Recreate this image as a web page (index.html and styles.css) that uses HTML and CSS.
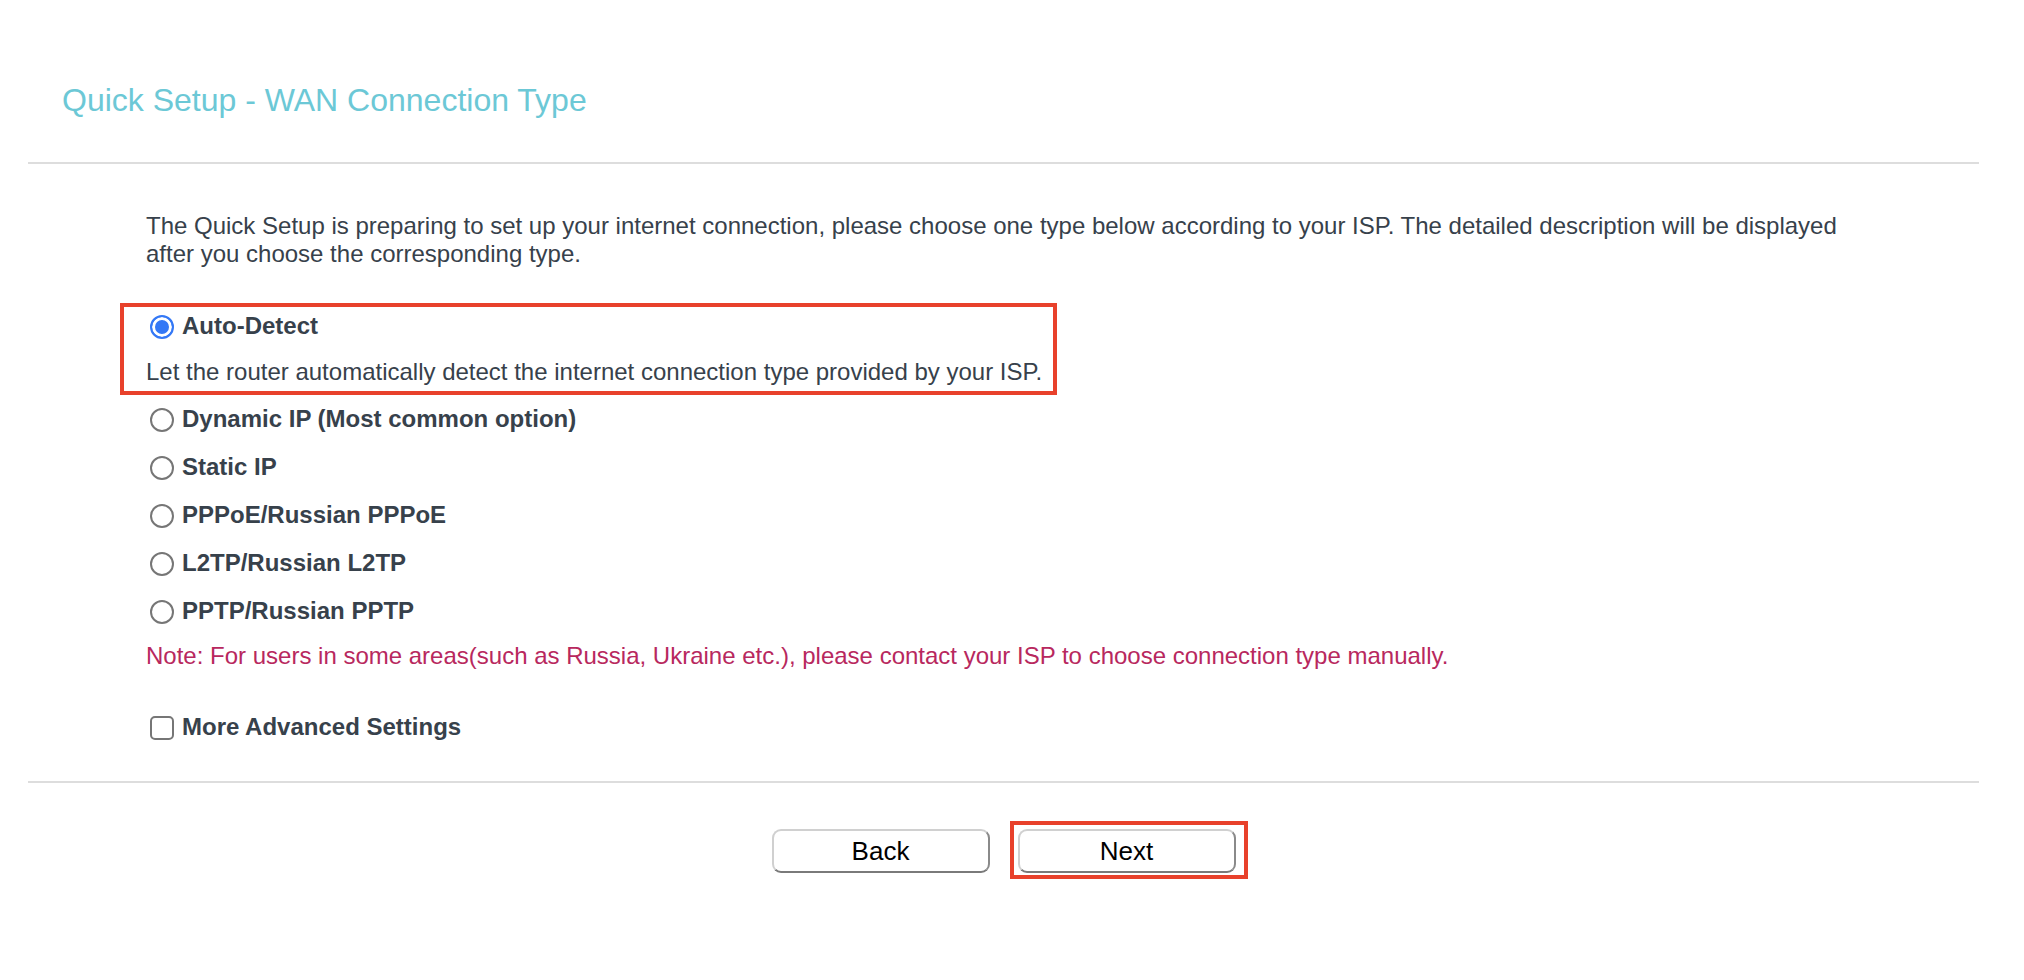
FILE: index.html
```
<!DOCTYPE html>
<html lang="en">
<head>
<meta charset="utf-8">
<title>Quick Setup - WAN Connection Type</title>
<link rel="stylesheet" href="styles.css">
</head>
<body>
<div class="page">
  <header class="head">
    <h1 class="title">Quick Setup - WAN Connection Type</h1>
  </header>
  <hr class="rule rule-top">
  <main class="content">
    <p class="intro">The Quick Setup is preparing to set up your internet connection, please choose one type below according to your ISP. The detailed description will be displayed after you choose the corresponding type.</p>
    <div class="highlight">
      <label class="opt opt-first"><input type="radio" name="wan" class="radio" checked><span class="opt-label">Auto-Detect</span></label>
      <p class="desc">Let the router automatically detect the internet connection type provided by your ISP.</p>
    </div>
    <div class="opts">
      <label class="opt"><input type="radio" name="wan" class="radio"><span class="opt-label">Dynamic IP (Most common option)</span></label>
      <label class="opt"><input type="radio" name="wan" class="radio"><span class="opt-label">Static IP</span></label>
      <label class="opt"><input type="radio" name="wan" class="radio"><span class="opt-label">PPPoE/Russian PPPoE</span></label>
      <label class="opt"><input type="radio" name="wan" class="radio"><span class="opt-label">L2TP/Russian L2TP</span></label>
      <label class="opt"><input type="radio" name="wan" class="radio"><span class="opt-label">PPTP/Russian PPTP</span></label>
    </div>
    <p class="note">Note: For users in some areas(such as Russia, Ukraine etc.), please contact your ISP to choose connection type manually.</p>
    <label class="opt opt-adv"><input type="checkbox" class="check"><span class="opt-label">More Advanced Settings</span></label>
  </main>
  <hr class="rule rule-bottom">
  <div class="actions">
    <button type="button" class="btn">Back</button>
    <span class="mark"><button type="button" class="btn">Next</button></span>
  </div>
</div>
</body>
</html>
```
FILE: styles.css
```
html, body {
  margin: 0;
  padding: 0;
  background: #ffffff;
}

body {
  font-family: "Liberation Sans", Arial, Helvetica, sans-serif;
  color: #37414b;
}

.page {
  padding: 0 45px 60px 28px;
}

.head {
  padding: 82px 0 0 34px;
}

.title {
  margin: 0;
  font-size: 32px;
  line-height: 37px;
  font-weight: normal;
  color: #6cc8d6;
}

.rule {
  border: 0;
  height: 2px;
  background: #dddddd;
  margin: 0;
}

.rule-top {
  margin-top: 43px;
}

.rule-bottom {
  margin-top: 30px;
}

.content {
  padding: 0 118px;
}

.intro {
  margin: 48px 0 0;
  font-size: 24px;
  line-height: 28px;
}

.highlight {
  margin: 35px 0 0 -26px;
  width: fit-content;
  border: 4px solid #e8412b;
  padding: 0 11px 0 22px;
}

.opt {
  display: flex;
  align-items: center;
  height: 48px;
  font-size: 24px;
  line-height: 28px;
}

.opt-first {
  height: 37px;
}

.opt-label {
  font-weight: bold;
}

.radio,
.check {
  appearance: none;
  -webkit-appearance: none;
  flex: none;
  width: 24px;
  height: 24px;
  margin: 2px 8px 0 4px;
  border: 2px solid #767676;
  background: #ffffff;
  box-sizing: border-box;
}

.radio {
  border-radius: 50%;
}

.radio:checked {
  border: 2.5px solid #3478f6;
  background: #3478f6;
  box-shadow: inset 0 0 0 3px #ffffff;
}

.check {
  border-radius: 5px;
}

.desc {
  margin: 0;
  padding: 14px 0 5px;
  font-size: 24px;
  line-height: 28px;
}

.note {
  margin: 7px 0 0;
  font-size: 24px;
  line-height: 28px;
  color: #b8285e;
}

.opt-adv {
  margin-top: 33px;
}

.actions {
  display: flex;
  justify-content: center;
  align-items: center;
  gap: 28px;
  margin-top: 46px;
}

.btn {
  width: 218px;
  height: 44px;
  box-sizing: border-box;
  border: 2px solid;
  border-color: #d0d0d0 #8a8a8a #7a7a7a #d0d0d0;
  border-radius: 9px;
  background: #ffffff;
  font-family: "Liberation Sans", Arial, Helvetica, sans-serif;
  font-size: 26px;
  color: #000000;
  padding: 0;
}

.mark {
  display: block;
  border: 4px solid #e8412b;
  padding: 4px 8px 2px 4px;
  margin: -8px -12px -6px -8px;
  line-height: 0;
}
```
